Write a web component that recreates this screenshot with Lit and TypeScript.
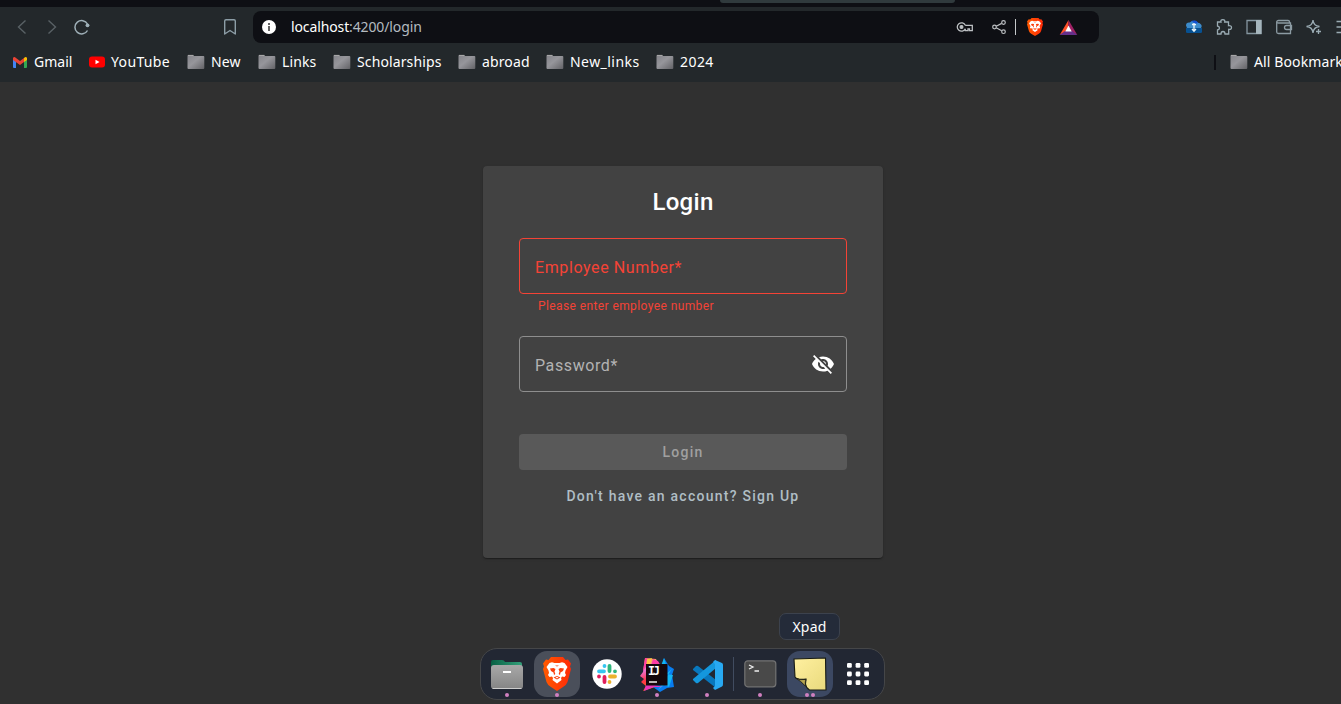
import { LitElement, html, css, svg } from "lit";
import { customElement } from "lit/decorators.js";

const folder = () => html`<svg width="18" height="16" viewBox="0 0 18 16"><defs><linearGradient id="g" x1="0" y1="0" x2="1" y2="1"><stop offset="0" stop-color="#84848a"/><stop offset=".45" stop-color="#96969b"/><stop offset="1" stop-color="#626266"/></linearGradient></defs><path d="M.5 3V1.800Q.5 1 1.300 1H6Q6.700 1 6.800 2H16.500Q17.300 2 17.300 3V14Q17.300 15 16.300 15H1.500Q.5 15 .5 14Z" fill="url(#g)"/><path d="M1 1.400H6.400" stroke="#aaa"/></svg>`;

const lion = svg`<path d="M6.500 6 9 5.200 11.500 6H16.500L19 5.200 21.500 6 24.500 10 22.500 13.500 22 16 23 18 21.500 20 19 19.500 18 21 18.500 23 14 26.500 9.500 23 10 21 9 19.500 6.500 20 5 18 6 16 5.500 13.500 3.500 10Z" fill="#fff"/><path d="M7 11.500 10.500 11 12.500 12 11.500 14.500 12.300 17 11 18 10.500 15.500 8 14ZM21 11.500 17.500 11 15.500 12 16.500 14.500 15.700 17 17 18 17.500 15.500 20 14ZM10.500 20.500 14 19 17.500 20.500 14 22.500ZM12 8.500H16L14 9.500Z" fill="#fb3e0c"/><path d="m12.500 20.500 1.500-.8 1.500.8-1.500 1Z" fill="#fff"/>`;

const brave = (w: number, h: number) => html`<svg width=${w} height=${h} viewBox="0 0 28 34" preserveAspectRatio="none"><defs><linearGradient id="b"><stop stop-color="#ff5a00"/><stop offset="1" stop-color="#ff2a08"/></linearGradient></defs><path d="M8 0H20L22.500 3 25 2.500 28 6.500 27 9.500 28 12 24.500 25Q23.500 28 20 30L14 34 8 30Q4.500 28 3.500 25L0 12 1 9.500 0 6.500 3 2.500 5.500 3Z" fill="url(#b)"/>${lion}</svg>`;

@customElement("app-root")
export class AppRoot extends LitElement {
  static styles = css`
    :host { display: block; height: 704px; background: #303030; overflow: hidden; color: #fff; font-family: "Noto Sans", sans-serif; }
    * { box-sizing: border-box; }
    svg { display: block; flex: none; }
    .page { height: 704px; display: flex; flex-direction: column; align-items: center; overflow: hidden; }
    .tabs { width: 1341px; height: 7px; background: #0e0f14; padding-left: 720px; flex: none; }
    .tab { width: 235px; height: 3px; background: #303a3d; border-radius: 0 0 8px 8px; }
    .chrome { width: 1341px; height: 75px; background: #23282b; overflow: hidden; flex: none; }
    .bar { height: 40px; display: flex; align-items: center; padding-left: 12px; }
    .nav { display: flex; gap: 10px; width: 208px; flex: none; }
    .url { margin-left: 13px; width: 846px; height: 32px; border-radius: 8px; background: #0e0f14; display: flex; align-items: center; padding: 0 21px 0 9px; font-size: 14px; letter-spacing: -0.12px; flex: none; }
    .address { margin-left: 15px; flex: 1; white-space: nowrap; padding-bottom: 2px; }
    .path { color: #b4bbc0; }
    .site { display: flex; align-items: center; }
    .key { margin-right: 17px; }
    .rule { width: 1px; height: 16px; background: #c4c8ca; margin: 0 11px 0 8px; }
    .bat { margin-left: 16px; }
    .tools { display: flex; margin-left: 85px; gap: 10px; flex: none; }
    .marks { display: flex; align-items: center; height: 30px; font-size: 14px; padding-left: 12px; white-space: nowrap; letter-spacing: .12px; }
    .mark { display: flex; align-items: center; flex: none; }
    .mark svg { margin-right: 6px; }
    .mark span { padding-bottom: 2px; }
    .gmail { width: 77px; letter-spacing: 0; } .yt { width: 98px; letter-spacing: .35px; }
    .new { width: 71px; } .links { width: 75px; } .scholar { width: 125px; } .abroad { width: 88px; } .nl { width: 110px; letter-spacing: .45px; } .year { width: 80px; letter-spacing: .45px; }
    .sep { width: 2px; height: 15px; background: #0e0f14; margin: 0 14px 0 478px; flex: none; }
    .card { width: 400px; height: 392px; margin-top: 84px; margin-left: 25px; padding: 21px 36px; background: #424242; border-radius: 4px; box-shadow: 0 2px 1px -1px #0003, 0 1px 1px #0002, 0 1px 3px #0002; font-family: Roboto, sans-serif; display: flex; flex-direction: column; flex: none; }
    h1 { font-size: 24px; line-height: 30px; font-weight: 500; letter-spacing: .3px; margin: 0 0 21px; text-align: center; }
    .field { height: 56px; border: 1px solid #8e8e8e; border-radius: 4px; display: flex; align-items: center; justify-content: space-between; padding: 2px 11px 0 15px; color: #b3b3b3; font-size: 16px; letter-spacing: .6px; flex: none; }
    .field svg { margin-top: -2px; }
    .bad { border-color: #f44336; color: #f44336; }
    .error { color: #f44336; font-size: 12px; letter-spacing: .4px; line-height: 20px; height: 42px; padding: 2px 0 0 19px; }
    .submit { margin-top: 42px; height: 36px; border: 0; border-radius: 4px; background: #595959; color: #a0a0a0; font: 500 14px Roboto, sans-serif; letter-spacing: 1.25px; flex: none; }
    .signup { margin-top: 16px; text-align: center; color: #b0bec5; font-size: 14px; line-height: 20px; font-weight: 500; letter-spacing: 1.25px; }
    .tip { width: 61px; height: 27px; margin: 55px 0 8px 278px; background: #242b39; border: 1px solid #3c424d; border-radius: 7px; font-size: 14px; letter-spacing: .2px; display: flex; align-items: center; justify-content: center; flex: none; }
    .dock { width: 405px; height: 52px; margin-left: 24px; background: #222733; border: 1px solid #454648; border-radius: 17px; display: flex; align-items: center; padding: 0 3px; flex: none; }
    .app { width: 46px; height: 46px; margin-right: 4px; border-radius: 13px; display: flex; flex-direction: column; align-items: center; justify-content: center; position: relative; flex: none; }
    .active { background: #4a4f5a; } .selected { background: #3c4862; margin-right: 2px; }
    .dots { position: absolute; bottom: 0; display: flex; gap: 2px; }
    .dots i { width: 4px; height: 4px; border-radius: 50%; background: #d080c0; }
    .div { width: 1px; height: 34px; background: #414c60; margin: 0 3px 0 -1px; flex: none; }
    .last { margin: 0; }
  `;

  render() {
    return html`<div class="page">
      <div class="tabs"><div class="tab"></div></div>
      <header class="chrome">
        <div class="bar">
          <div class="nav">
            <svg width="20" height="20" fill="none" stroke="#596165" stroke-width="1.400"><path d="m13.500 3.500-7 6.500 7 6.500"/></svg>
            <svg width="20" height="20" fill="none" stroke="#596165" stroke-width="1.400"><path d="m6.500 3.500 7 6.500-7 6.500"/></svg>
            <svg width="20" height="20" fill="none" stroke="#9fb0b8" stroke-width="1.500"><path d="M15.500 7A6.700 6.700 0 1 0 15.500 13.500"/><circle cx="15.500" cy="8.300" r="1.900" fill="#9fb0b8" stroke="none"/></svg>
          </div>
          <svg width="20" height="20" fill="none" stroke="#8d9ea7" stroke-width="1.400"><path d="M4.700 4Q4.700 2.700 6 2.700H14Q15.300 2.700 15.300 4V17L10 13.500 4.700 17Z" stroke-linejoin="round"/></svg>
          <div class="url">
            <svg width="14" height="14"><circle cx="7" cy="7" r="7" fill="#fff"/><path d="M7 3V5M7 6V11" stroke="#333" stroke-width="1.500"/></svg>
            <span class="address">localhost<span class="path">:4200/login</span></span>
            <div class="site">
              <svg class="key" width="18" height="14" fill="none" stroke="#bdc0c3" stroke-width="1.300"><path d="M9.300 5.300H16.300V10.700H13.500V8.800H12V10.700H9.300V8.700M9.300 5.300A4.200 4.200 0 1 0 9.300 8.700"/><circle cx="5.500" cy="7" r="1.400" fill="#bdc0c3"/></svg>
              <svg width="16" height="16" fill="none" stroke="#bdc0c3" stroke-width="1.200"><circle cx="3.500" cy="8" r="1.800"/><circle cx="12.500" cy="3.500" r="1.800"/><circle cx="12.500" cy="12.700" r="1.800"/><path d="m5.200 7.200 5.500-2.800M5.200 8.800l5.500 3"/></svg>
              <div class="rule"></div>${brave(16, 18)}
              <svg class="bat" width="19" height="17"><path d="M9.500 1 .7 16 9.500 11Z" fill="#ff5028"/><path d="M9.500 1 18.300 16 9.500 11Z" fill="#9e2064"/><path d="M.7 16H18.300L13 12H6Z" fill="#65308b"/><path d="M9.500 6.500 12.700 12.500H6.300Z" fill="#fff"/></svg>
            </div>
          </div>
          <div class="tools">
            <svg width="20" height="20"><circle cx="10" cy="8.500" r="5" fill="#1452d0"/><path d="M2 8.500Q2 5 6 5.500 9 3 12 5.500 16 5 17.500 8Q18 10 17 11V14.500Q17 16 15 16H5Q3 16 3 14V11Z" fill="#3d8ccb"/><path d="M8 4.500Q12 2.500 14 6L11 7Z" fill="#1452d0"/><path d="M2 11H18V15Q18 16 16.500 16H3.500Q2 16 2 15Z" fill="#075192"/><path d="M10 6V14M8 12 10 14.200 12 12M8 7.500H12" fill="none" stroke="#e9f6fc" stroke-width="1.300"/></svg>
            <svg width="20" height="20" fill="none" stroke="#9aabb3" stroke-width="1.300"><path d="M3.500 5H7Q6.300 2.700 8.800 2.700 11.300 2.700 10.700 5H14.500V8.700Q17.500 8.300 17.500 10.500 17.500 12.800 14.700 12.300V17H11Q11 14.500 9 14.500T7 17H3.500V13Q5.500 12.500 5.500 11T3.500 9Z"/></svg>
            <svg width="20" height="20"><path d="M3 3.500H17V16.500H3Z" fill="none" stroke="#8596a0" stroke-width="1.300"/><path d="M12 3H17.500V17H12Z" fill="#a5b5bc"/></svg>
            <svg width="20" height="20" fill="none" stroke="#8c9ba3" stroke-width="1.300"><path d="M15.500 6V4.700Q15.500 3.500 14 3.500H4.500Q2.700 3.500 2.700 5V15Q2.700 16.500 4.500 16.500H16.500V6H4.500Q2.700 6 2.700 4.500"/><path d="M17.500 8.500H12.500Q10.500 8.500 10.500 10.500T12.500 12.500H17.500Z"/></svg>
            <svg width="20" height="20" fill="none" stroke="#9aabb3" stroke-width="1.300"><path d="M9 3Q9.500 9 15.500 9.500 9.500 10 9 16 8.500 10 2.500 9.500 8.500 9 9 3ZM14.500 12V17M12 14.500H17"/></svg>
            <svg width="20" height="20" stroke="#9aabb3" stroke-width="1.400"><path d="M2.500 4.500H17M2.500 10H17M2.500 15.500H17"/></svg>
          </div>
        </div>
        <div class="marks">
          <div class="mark gmail"><svg width="16" height="16"><path d="M1 4H4V14H2Q1 14 1 13Z" fill="#4285f4"/><path d="M12 4H15V13Q15 14 14 14H12Z" fill="#34a853"/><path d="M1 4Q2 2 4 4L8 7 12 4V8L8 11 1 6Z" fill="#ea4335"/><path d="M12 4Q14 2 15 4V6L12 8Z" fill="#fbbc04"/></svg><span>Gmail</span></div>
          <div class="mark yt"><svg width="16" height="16"><rect y="2.500" width="16" height="11" rx="3" fill="#f00"/><path d="m6.500 5.700 4 2.300-4 2.300Z" fill="#fff"/></svg><span>YouTube</span></div>
          <div class="mark new">${folder()}<span>New</span></div><div class="mark links">${folder()}<span>Links</span></div><div class="mark scholar">${folder()}<span>Scholarships</span></div><div class="mark abroad">${folder()}<span>abroad</span></div><div class="mark nl">${folder()}<span>New_links</span></div><div class="mark year">${folder()}<span>2024</span></div>
          <div class="sep"></div><div class="mark">${folder()}<span>All Bookmarks</span></div>
        </div>
      </header>
      <main class="card">
        <h1>Login</h1>
        <div class="field bad">Employee Number*</div>
        <div class="error">Please enter employee number</div>
        <div class="field">Password*<svg width="24" height="24" fill="#fff"><path d="M12 7c2.760 0 5 2.240 5 5 0 .65-.13 1.260-.36 1.830l2.920 2.920c1.510-1.260 2.700-2.890 3.430-4.750-1.730-4.390-6-7.500-11-7.500-1.400 0-2.740.25-3.980.7l2.160 2.160C10.740 7.130 11.350 7 12 7zM2 4.270l2.280 2.280.46.46C3.080 8.300 1.780 10.020 1 12c1.730 4.390 6 7.500 11 7.500 1.550 0 3.030-.3 4.380-.84l.42.42L19.730 22 21 20.730 3.270 3 2 4.270zM7.530 9.800l1.550 1.550c-.05.21-.08.43-.08.65 0 1.660 1.340 3 3 3 .22 0 .44-.03.65-.08l1.550 1.550c-.67.33-1.410.53-2.200.53-2.760 0-5-2.240-5-5 0-.79.2-1.530.53-2.200zm4.310-.78l3.150 3.150.02-.16c0-1.660-1.340-3-3-3l-.17.01z"/></svg></div>
        <button class="submit">Login</button>
        <div class="signup">Don't have an account? Sign Up</div>
      </main>
      <div class="tip">Xpad</div>
      <nav class="dock">
        <div class="app"><svg width="34" height="32"><defs><linearGradient id="f" x2="0" y2="1"><stop stop-color="#a8a8a8"/><stop offset="1" stop-color="#858585"/></linearGradient><linearGradient id="fg"><stop stop-color="#086044"/><stop offset="1" stop-color="#34a17b"/></linearGradient></defs><path d="M1 9V4Q1 2 3 2H12Q14 2 15 4H30Q32 4 32 6V12H1Z" fill="url(#fg)"/><rect x="1" y="7" width="32" height="24" rx="3" fill="url(#f)"/><path d="M2.500 30.500H31.500" stroke="#ccc"/><rect x="13" y="13" width="8" height="2" fill="#fff"/></svg><span class="dots"><i></i></span></div>
        <div class="app active">${brave(28, 34)}<span class="dots"><i></i></span></div>
        <div class="app"><svg width="30" height="30"><circle cx="15" cy="15" r="14.700" fill="#fff"/><g stroke-width="3.800" stroke-linecap="round"><path d="M7 12.300H12M12.500 7V7" stroke="#36c5f0"/><path d="M17.500 7V12M23 12.300V12.300" stroke="#2eb67d"/><path d="M18 17.500H23M17.500 23V23" stroke="#ecb22e"/><path d="M12.500 18V23M7 17.500V17.500" stroke="#e01e5a"/></g></svg></div>
        <div class="app"><svg width="34" height="35"><defs><linearGradient id="p" x2=".2" y2="1"><stop stop-color="#ff9e30"/><stop offset=".25" stop-color="#f5a07c"/><stop offset=".4" stop-color="#ec72d2"/><stop offset=".7" stop-color="#ff344c"/><stop offset="1" stop-color="#ff6b13"/></linearGradient></defs><path d="M5 1 16 2 20 10 15 30 3 34 6 29 1 25 4 22 0 19 3 15Z" fill="url(#p)"/><path d="M5 1 10 2 8 7 3 14ZM13 2 18 4 21 9H11Z" fill="#ff3ca5"/><path d="M7 2 12 1 10 8 6 10Z" fill="#fbc247"/><path d="M22 8 24 1 29 9 34 12 32 18 34 30 27 31 20 35 13 30 22 22Z" fill="#087cf0"/><path d="m24 1 3 10-6-2m11 3-6 5 7 1-4 12-5-2-6 5" fill="#13b5f2"/><path d="M6 28 14 28 23 30 14 30 4 34Z" fill="#e736bd"/><rect x="6" y="7" width="21.500" height="21.500" fill="#15080d"/><text x="8" y="18" fill="#fff" font-family="DejaVu Sans Mono" font-weight="700" font-size="11.500" textLength="12">IJ</text><path d="M9 25H17" stroke="#fff" stroke-width="1.400"/></svg><span class="dots"><i></i></span></div>
        <div class="app"><svg width="31" height="31"><path d="M1 10 4 7Q5 6.500 6 7L24 21V29L1 11Z" fill="#0877bd"/><path d="M1 21 4 24Q5 24.500 6 24L24 9V1L1 20Z" fill="#1497dd"/><path d="M23 1 30 4Q31 4.500 31 6V25Q31 27 30 27.500L23 31 21 29 23 27V5L21 3Z" fill="#28a9f2"/></svg><span class="dots"><i></i></span></div>
        <div class="div"></div>
        <div class="app"><svg width="33" height="28"><rect x=".8" y=".8" width="31" height="26" rx="3" fill="#494949" stroke="#737373" stroke-width="1.200"/><path d="m5 5 4 2-4 2M10.500 11H15" fill="none" stroke="#eee" stroke-width="1.300"/></svg><span class="dots"><i></i></span></div>
        <div class="app selected"><svg width="34" height="34"><defs><linearGradient id="n" x2="1" y2="1"><stop stop-color="#fff0a0"/><stop offset="1" stop-color="#e9da7d"/></linearGradient></defs><path d="M1 2 32.500 1 33 33H16.500Q13 31 12.500 27L13 22Q4 23 2 20Z" fill="url(#n)" stroke="#181b12" stroke-width="1.100"/><path d="M2.500 21Q6 23.500 13 22.500 12 24 12.300 29Q8 24 2.500 21Z" fill="#b7a651" stroke="#181b12" stroke-width=".8"/></svg><span class="dots"><i></i><i></i></span></div>
        <div class="app last"><svg width="24" height="24" fill="#fff">${[0, 1, 2].map(y => [0, 1, 2].map(x => svg`<rect x=${1 + x * 8.6} y=${1 + y * 8.6} width="4.800" height="4.800" rx="1.300"/>`))}</svg></div>
      </nav>
    </div>`;
  }
}
